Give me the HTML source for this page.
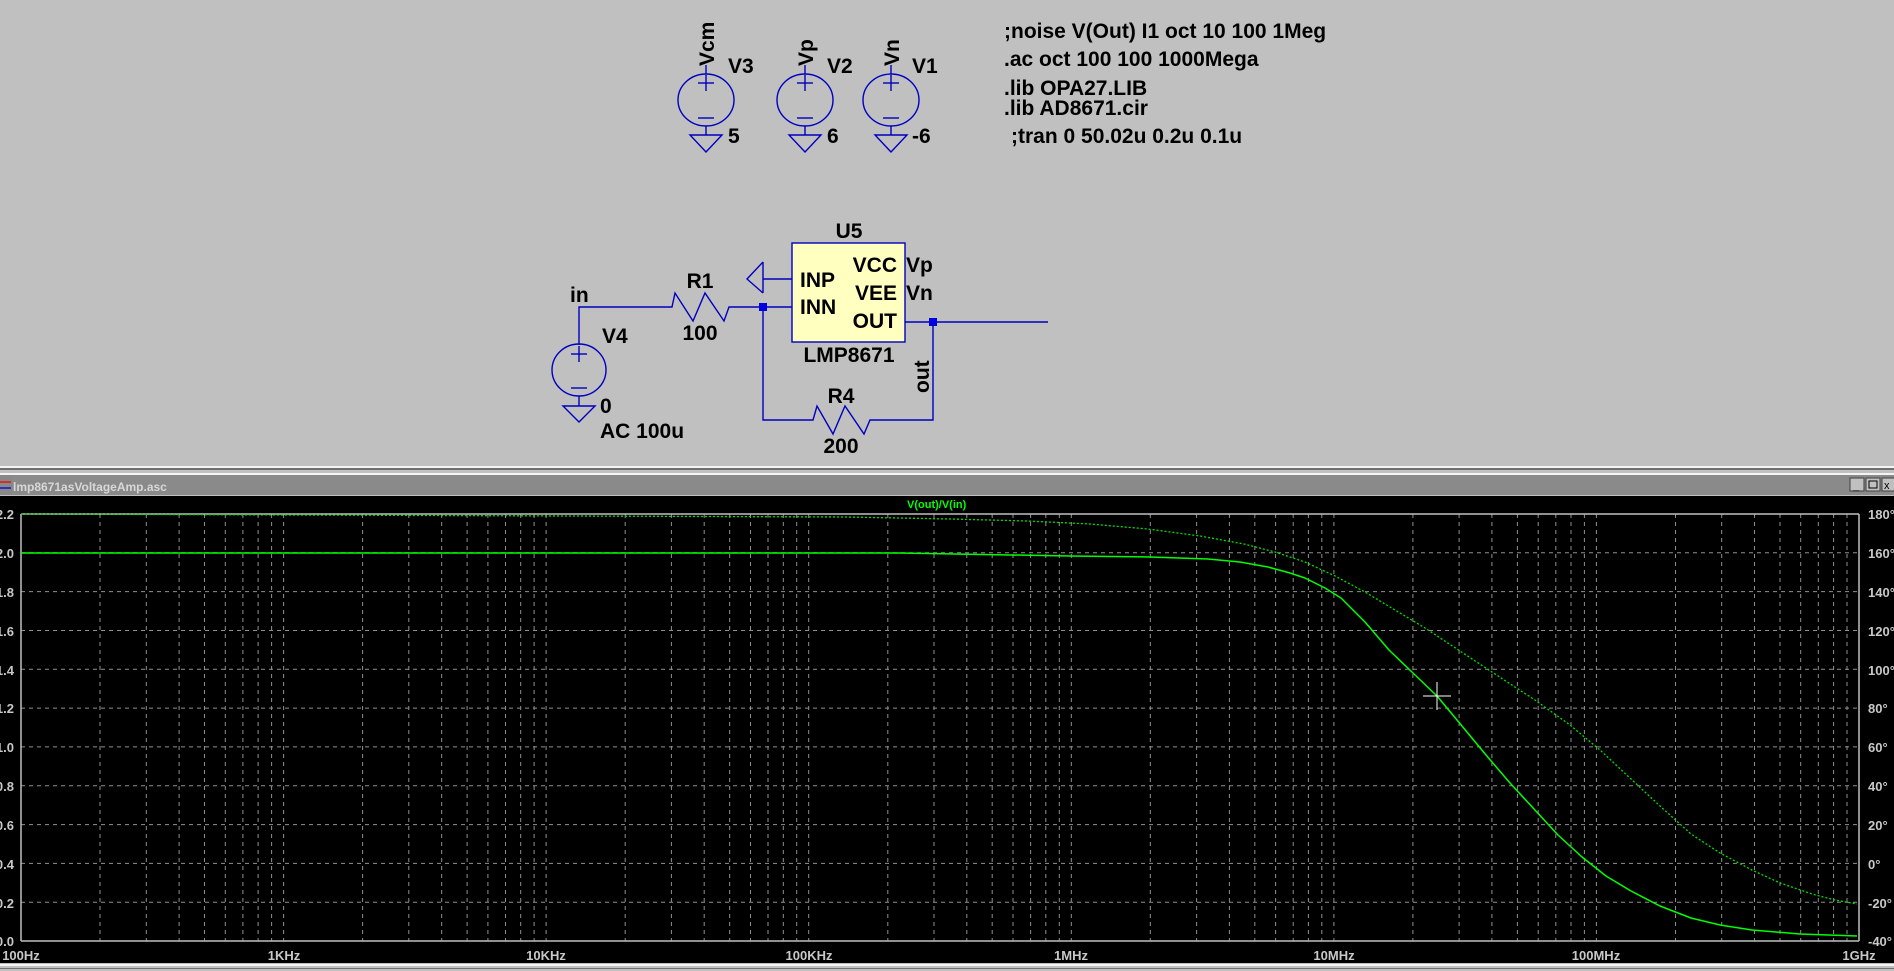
<!DOCTYPE html>
<html><head><meta charset="utf-8"><style>
html,body{margin:0;padding:0;width:1894px;height:971px;overflow:hidden;background:#c0c0c0;font-family:"Liberation Sans",sans-serif}
svg{position:absolute;left:0;top:0}
</style></head><body>
<svg width="1894" height="971" xmlns="http://www.w3.org/2000/svg">
<rect width="1894" height="971" fill="#c0c0c0"/>
<g font-family="Liberation Sans, sans-serif" font-size="21" font-weight="bold" fill="#000">
<text x="1004" y="38">;noise V(Out) I1 oct 10 100 1Meg</text>
<text x="1004" y="66">.ac oct 100 100 1000Mega</text>
<text x="1004" y="95">.lib OPA27.LIB</text>
<text x="1004" y="115">.lib AD8671.cir</text>
<text x="1011" y="143">;tran 0 50.02u 0.2u 0.1u</text>
</g>
<g fill="none" stroke="#0000c0" stroke-width="1.4">
<line x1="706" y1="65" x2="706" y2="74"/><ellipse cx="706" cy="100" rx="28" ry="26"/><line x1="706" y1="126" x2="706" y2="135"/>
<line x1="698" y1="83" x2="714" y2="83"/><line x1="706" y1="75" x2="706" y2="91"/><line x1="698" y1="118" x2="714" y2="118"/>
<path d="M690 135 H722 L706 152 Z"/>
<line x1="805" y1="65" x2="805" y2="74"/><ellipse cx="805" cy="100" rx="28" ry="26"/><line x1="805" y1="126" x2="805" y2="135"/>
<line x1="797" y1="83" x2="813" y2="83"/><line x1="805" y1="75" x2="805" y2="91"/><line x1="797" y1="118" x2="813" y2="118"/>
<path d="M789 135 H821 L805 152 Z"/>
<line x1="891" y1="65" x2="891" y2="74"/><ellipse cx="891" cy="100" rx="28" ry="26"/><line x1="891" y1="126" x2="891" y2="135"/>
<line x1="883" y1="83" x2="899" y2="83"/><line x1="891" y1="75" x2="891" y2="91"/><line x1="883" y1="118" x2="899" y2="118"/>
<path d="M875 135 H907 L891 152 Z"/>
<rect x="792" y="243" width="113" height="99" fill="#ffffc0"/>
<line x1="792" y1="279" x2="763" y2="279"/><path d="M763 262 L747 279 L763 293"/><line x1="763" y1="262" x2="763" y2="293"/>
<path d="M579 345 V307 H672 L675 293 L693 321 L705 293 L724 321 L729 307 H792"/>
<path d="M763 307 V420 H813 L817 406 L833 434 L845 406 L864 434 L870 420 H933 V322"/>
<line x1="905" y1="322" x2="1048" y2="322"/>
<ellipse cx="579" cy="370" rx="27" ry="26"/><line x1="579" y1="396" x2="579" y2="406"/>
<line x1="571" y1="354" x2="587" y2="354"/><line x1="579" y1="346" x2="579" y2="362"/><line x1="571" y1="388" x2="587" y2="388"/>
<path d="M563 406 H595 L579 422 Z"/>
</g>
<rect x="759" y="303" width="8" height="8" fill="#0000e0"/>
<rect x="929" y="318" width="8" height="8" fill="#0000e0"/>
<g font-family="Liberation Sans, sans-serif" font-size="21" font-weight="bold" fill="#000">
<text transform="translate(714,66) rotate(-90)">Vcm</text>
<text transform="translate(813,66) rotate(-90)">Vp</text>
<text transform="translate(899,66) rotate(-90)">Vn</text>
<text x="728" y="73">V3</text><text x="827" y="73">V2</text><text x="912" y="73">V1</text>
<text x="728" y="143">5</text><text x="827" y="143">6</text><text x="912" y="143">-6</text>
<text x="849" y="238" text-anchor="middle">U5</text>
<text x="800" y="287">INP</text><text x="800" y="314">INN</text>
<text x="897" y="272" text-anchor="end">VCC</text><text x="897" y="300" text-anchor="end">VEE</text><text x="897" y="328" text-anchor="end">OUT</text>
<text x="906" y="272">Vp</text><text x="906" y="300">Vn</text>
<text x="849" y="362" text-anchor="middle">LMP8671</text>
<text x="570" y="302">in</text><text x="602" y="343">V4</text><text x="600" y="413">0</text><text x="600" y="438">AC 100u</text>
<text x="700" y="288" text-anchor="middle">R1</text><text x="700" y="340" text-anchor="middle">100</text>
<text x="841" y="403" text-anchor="middle">R4</text><text x="841" y="453" text-anchor="middle">200</text>
<text transform="translate(929,393) rotate(-90)">out</text>
</g>
<rect x="0" y="466" width="1894" height="2" fill="#f4f4f4"/>
<rect x="0" y="468" width="1894" height="2" fill="#707070"/>
<rect x="0" y="473" width="1894" height="2" fill="#f4f4f4"/>
<rect x="0" y="475" width="1894" height="20" fill="#888"/>
<rect x="12" y="475" width="1882" height="20" fill="#8a8a8a"/>
<rect x="0" y="481" width="11" height="2" fill="#d03030"/><rect x="0" y="487" width="11" height="2" fill="#3030c0"/>
<text x="13" y="491" font-family="Liberation Sans, sans-serif" font-size="12" font-weight="bold" fill="#d8d8d8">lmp8671asVoltageAmp.asc</text>
<g stroke="#404040" fill="#c0c0c0"><rect x="1850" y="478" width="14" height="13"/><rect x="1866" y="478" width="14" height="13"/><rect x="1882" y="478" width="14" height="13"/></g>
<text x="1853" y="489" font-size="11" font-family="Liberation Sans" fill="#000">_</text>
<rect x="1869" y="481" width="8" height="7" fill="none" stroke="#000"/>
<text x="1884" y="489" font-size="11" font-family="Liberation Sans" fill="#000">x</text>
<rect x="0" y="496" width="1894" height="467" fill="#000"/>
<rect x="0" y="963" width="1894" height="8" fill="#c0c0c0"/>
<rect x="0" y="964" width="1894" height="2" fill="#f4f4f4"/>
<rect x="0" y="968" width="1894" height="1" fill="#707070"/>
<g id="grid" stroke="#909090" stroke-width="1" stroke-dasharray="4,4"></g>
<g stroke="#c0c0c0" stroke-width="1.5"><line x1="21" y1="514" x2="21" y2="941"/><line x1="1859" y1="514" x2="1859" y2="941"/><line x1="21" y1="941" x2="1859" y2="941"/><line x1="21" y1="514" x2="1859" y2="514"/></g>
<g font-family="Liberation Sans, sans-serif" font-size="13" font-weight="bold" fill="#c8c8c8">
<text x="14" y="519" text-anchor="end">2.2</text><text x="14" y="558" text-anchor="end">2.0</text><text x="14" y="597" text-anchor="end">1.8</text><text x="14" y="636" text-anchor="end">1.6</text><text x="14" y="675" text-anchor="end">1.4</text><text x="14" y="713" text-anchor="end">1.2</text><text x="14" y="752" text-anchor="end">1.0</text><text x="14" y="791" text-anchor="end">0.8</text><text x="14" y="830" text-anchor="end">0.6</text><text x="14" y="869" text-anchor="end">0.4</text><text x="14" y="908" text-anchor="end">0.2</text><text x="14" y="946" text-anchor="end">0.0</text>
<text x="1868" y="519">180°</text><text x="1868" y="558">160°</text><text x="1868" y="597">140°</text><text x="1868" y="636">120°</text><text x="1868" y="675">100°</text><text x="1868" y="713">80°</text><text x="1868" y="752">60°</text><text x="1868" y="791">40°</text><text x="1868" y="830">20°</text><text x="1868" y="869">0°</text><text x="1868" y="908">-20°</text><text x="1868" y="946">-40°</text>
<text x="21" y="960" text-anchor="middle">100Hz</text><text x="284" y="960" text-anchor="middle">1KHz</text><text x="546" y="960" text-anchor="middle">10KHz</text><text x="809" y="960" text-anchor="middle">100KHz</text><text x="1071" y="960" text-anchor="middle">1MHz</text><text x="1334" y="960" text-anchor="middle">10MHz</text><text x="1596" y="960" text-anchor="middle">100MHz</text><text x="1859" y="960" text-anchor="middle">1GHz</text>
</g>
<text x="907" y="508" font-family="Liberation Sans, sans-serif" font-size="11" font-weight="bold" fill="#00ff00">V(out)/V(in)</text>
<polyline fill="none" stroke="#00ff00" stroke-width="1.5" stroke-linejoin="round" points="21,553 900,553 1070,556 1150,557 1208,559 1240,562 1268,567 1290,573 1305,578 1325,588 1341,598 1365,622 1389,650 1413,673 1437,696 1462,726 1486,755 1510,783 1534,809 1558,835 1582,857 1606,876 1631,891 1660,906 1691,918 1720,925 1752,930 1800,934 1857,936"/>
<polyline fill="none" stroke="#00e000" stroke-width="1.3" stroke-dasharray="2,2" stroke-linejoin="round" points="21,514 846,517 950,519 1027,521 1090,524 1148,529 1200,536 1244,544 1275,552 1305,562 1335,576 1365,592 1395,610 1425,628 1460,651 1498,676 1535,700 1570,725 1600,750 1631,779 1660,806 1691,834 1720,853 1752,870 1780,883 1812,894 1835,900 1857,904"/>
<g stroke="#ffffff" stroke-width="1"><line x1="1423" y1="696" x2="1451" y2="696"/><line x1="1437" y1="682" x2="1437" y2="710"/></g>
</svg>
<script>
var g=document.getElementById('grid'),D=(1859-21)/7,s='';
for(var d=0;d<7;d++)for(var k=1;k<=9;k++){var x=21+d*D+Math.log10(k)*D;if(k==1&&d==0)continue;s+='<line x1="'+x.toFixed(1)+'" y1="514" x2="'+x.toFixed(1)+'" y2="941"/>';}
for(var i=1;i<11;i++){var y=514+i*38.82;s+='<line x1="21" y1="'+y.toFixed(1)+'" x2="1859" y2="'+y.toFixed(1)+'"/>';}
g.innerHTML=s;
</script>
</body></html>
